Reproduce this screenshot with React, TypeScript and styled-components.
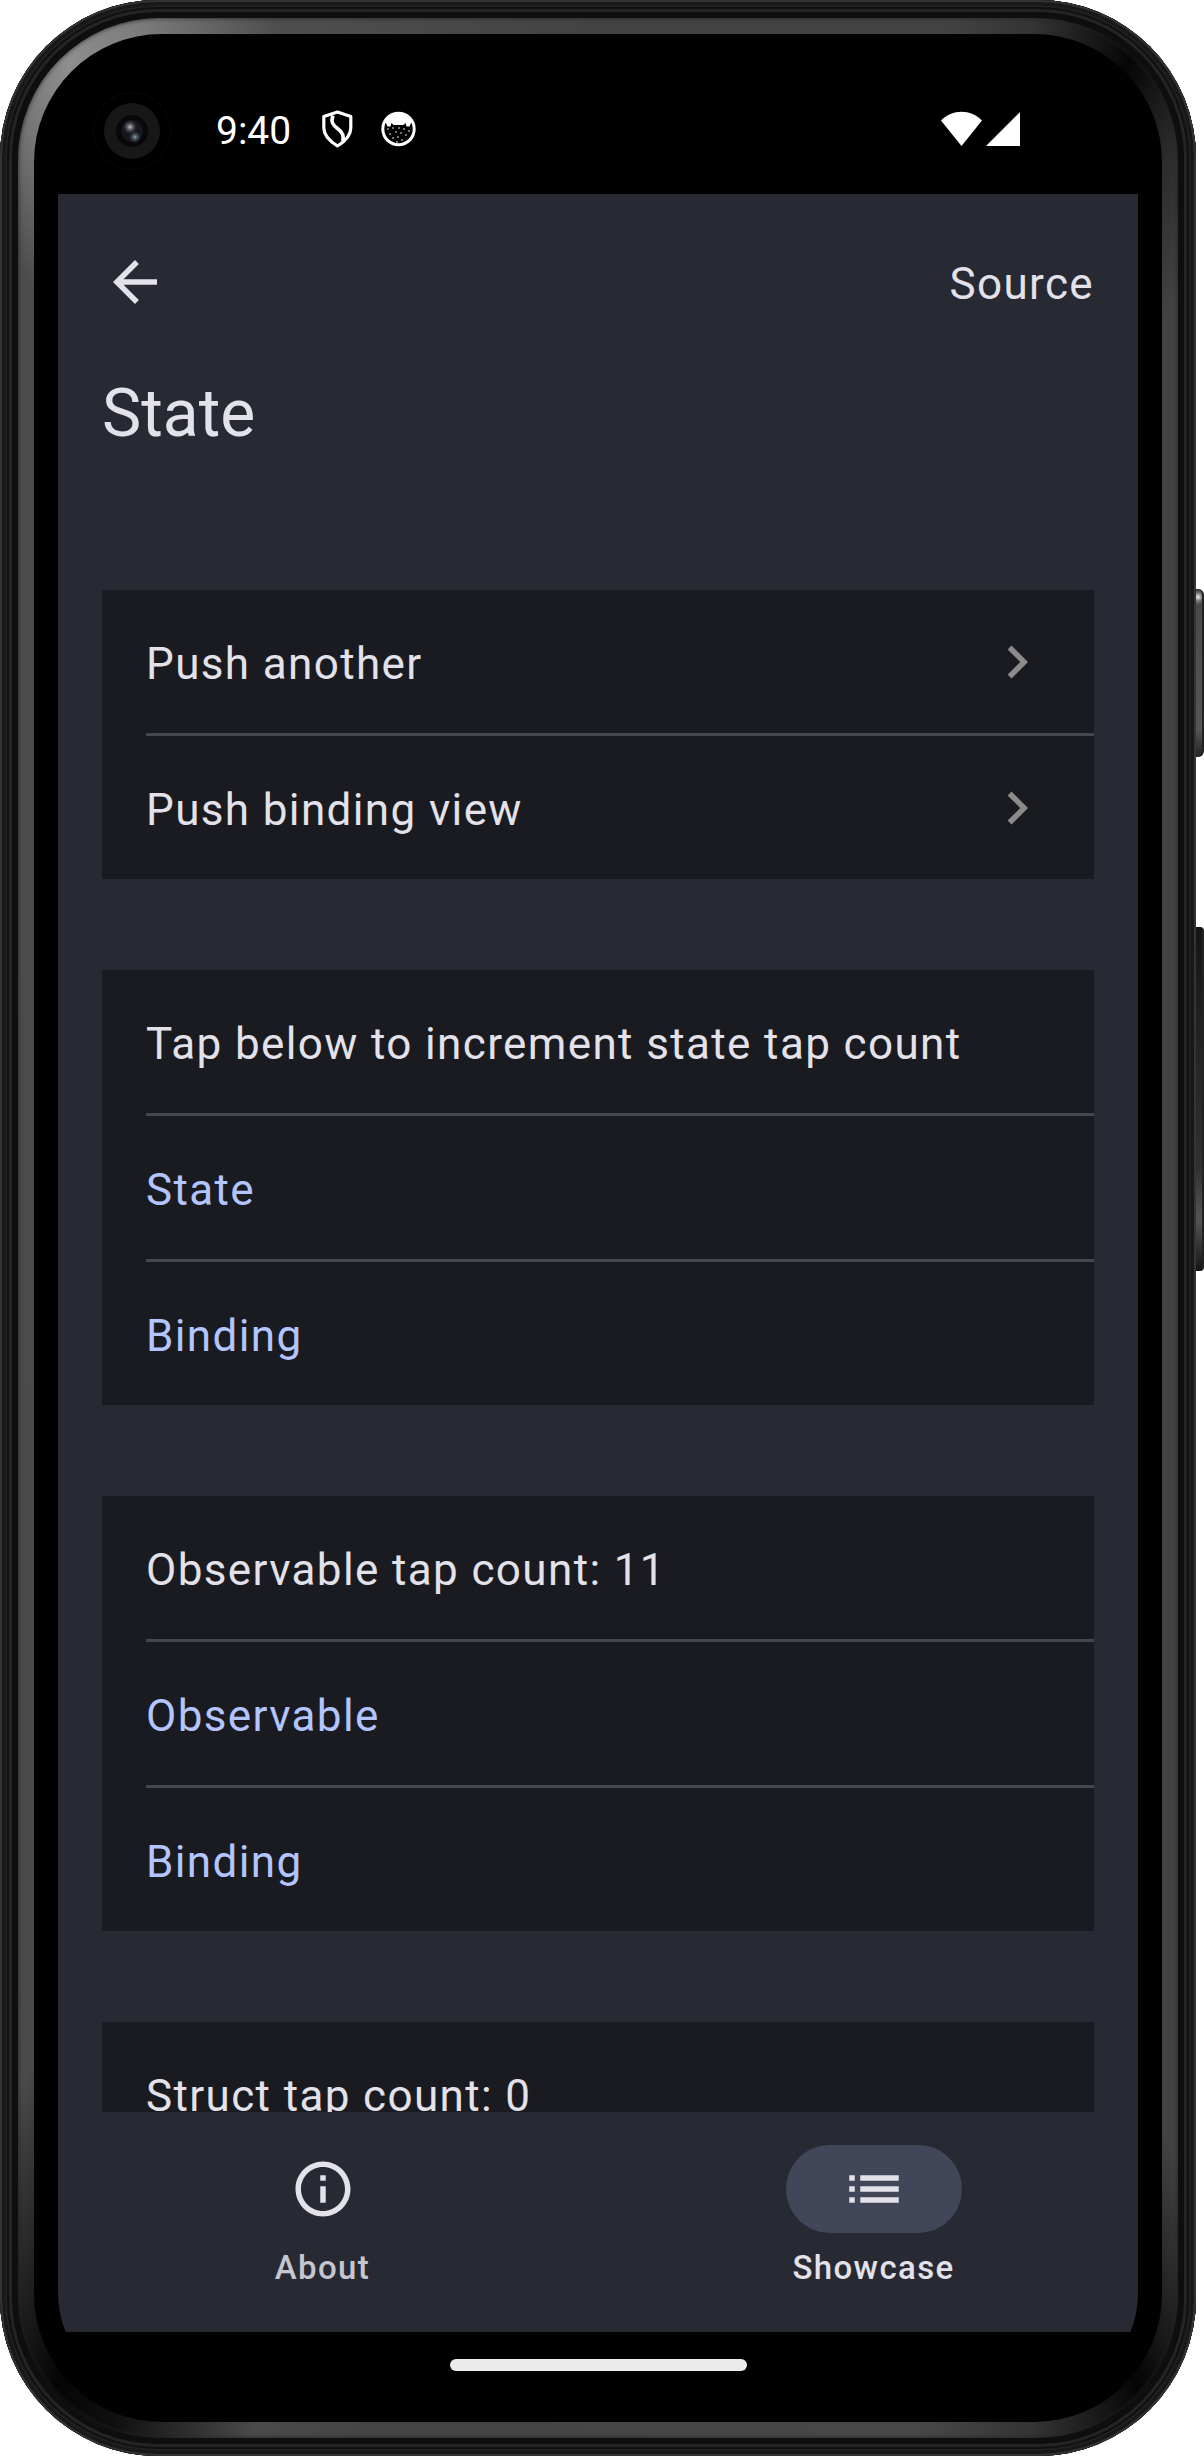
import React from "react";
import styled, { createGlobalStyle } from "styled-components";

const Global = createGlobalStyle`
  * { box-sizing: border-box; }
  html, body { margin: 0; background: #fff; }
  body { font-family: Roboto, "Noto Sans", sans-serif; color: #e3e1e9; }
`;

const Stage = styled.div`
  display: flex;
  width: 1204px;
  height: 2456px;
  overflow: hidden;
`;

const Body = styled.div`
  width: 1196px;
  height: 2456px;
  padding: 18px;
  border-radius: 158px;
  background: #101010;
  box-shadow: inset 0 0 0 2px #343434, inset 0 0 0 5px #181818, inset 0 0 0 7px #202020,
    inset 0 0 0 9px #101010, inset 0 0 0 12px #242424, inset 0 0 4px 15px #0e0e0e;
`;

const Rim = styled.div`
  height: 100%;
  padding: 16px;
  border-radius: 142px;
  background: conic-gradient(
    from 0deg,
    #434343 0deg, #434343 16deg, #333 20deg, #060606 24.5deg, #2c2c2c 28deg, #434343 32deg,
    #434343 148deg, #2c2c2c 151deg, #050505 155deg, #333 160deg, #484848 165deg,
    #444 190deg, #4a4a4a 196deg, #101010 202deg, #050505 205deg, #262626 209deg, #4a4a4a 214deg,
    #4c4c4c 329deg, #747474 332.5deg, #8e8e8e 335.5deg, #7c7c7c 339deg, #4e4e4e 345deg, #434343 360deg
  );
  box-shadow: inset 0 0 4px #222;
`;

const Glass = styled.div`
  height: 100%;
  padding: 25px 24px;
  border-radius: 128px;
  background: #010101;
`;

const Screen = styled.div`
  display: flex;
  flex-direction: column;
  height: 2338px;
  border-radius: 104px;
  overflow: hidden;
  background: #000;
`;

const Keys = styled.div`
  width: 8px;
  padding-top: 589px;
  display: flex;
  flex-direction: column;
  gap: 170px;
`;

const PowerKey = styled.div`
  height: 168px;
  border-radius: 0 6px 6px 0;
  border-right: 2px solid #222;
  background: radial-gradient(circle at 2px 8px, #eee 0, #777 4px, transparent 8px),
    linear-gradient(#222 0, #484a49 16px, #555756 140px, #222 100%);
`;

const VolumeKey = styled.div`
  height: 344px;
  border-radius: 0 4px 4px 0;
  border-right: 2px solid #222;
  background: linear-gradient(#151515, #262626 40%, #303030 70%, #555 85%, #151515);
`;

const StatusBar = styled.div`
  height: 135px;
  flex: none;
  display: flex;
  align-items: center;
  padding: 5px 117px 0 35px;
`;

const Camera = styled.div`
  width: 78px;
  height: 78px;
  margin-top: 4px;
  border: 1px solid #0b0b0b;
  border-radius: 50%;
  display: flex;
  align-items: center;
  justify-content: center;
`;

const Clock = styled.time`
  margin: 3px 26px 0 45px;
  width: 80px;
  font-size: 39px;
  line-height: 46px;
  white-space: nowrap;
  color: #fff;
`;

const StatusIcons = styled.div`
  display: flex;
  align-items: center;
  gap: 26px;
  flex: 1;
`;

const Page = styled.main`
  height: 1918px;
  flex: none;
  overflow: hidden;
  background: #272a33;
  padding: 0 44px;
`;

const AppBar = styled.header`
  height: 176px;
  display: flex;
  align-items: center;
  justify-content: space-between;
`;

const BackButton = styled.button`
  border: 0;
  padding: 0;
  background: none;
  display: flex;
`;

const SourceLink = styled.span`
  font-size: 44px;
  line-height: 66px;
  letter-spacing: 1.375px;
  padding-top: 4px;
`;

const Title = styled.h1`
  margin: 0;
  height: 220px;
  font-size: 66px;
  line-height: 88px;
  font-weight: 400;
`;

const Sections = styled.div`
  display: flex;
  flex-direction: column;
  gap: 91px;
`;

const Card = styled.section`
  background: #1a1b20;
  padding-left: 44px;
`;

const Row = styled.div<{ $action?: boolean }>`
  height: 143px;
  display: flex;
  align-items: center;
  justify-content: space-between;
  padding: 1px 44px 0 0;
  font-size: 44px;
  line-height: 66px;
  letter-spacing: 1.375px;
  white-space: nowrap;
  color: ${(p) => (p.$action ? "#b3c5ff" : "#e3e1e9")};

  & + & {
    height: 146px;
    border-top: 3px solid #45464f;
  }
`;

const Label = styled.span`
  padding-top: 4px;
`;

const NavBar = styled.nav`
  height: 220px;
  flex: none;
  display: grid;
  grid-template-columns: 529px 529px;
  column-gap: 22px;
  background: #272a33;
`;

const NavItem = styled.div<{ $active?: boolean }>`
  display: flex;
  flex-direction: column;
  align-items: center;
  padding-top: 33px;
  gap: 13px;
  font-size: 33px;
  line-height: 44px;
  font-weight: 500;
  letter-spacing: 1.375px;
  color: ${(p) => (p.$active ? "#e3e1e9" : "#c6c6d0")};
`;

const Indicator = styled.div<{ $active?: boolean }>`
  width: 176px;
  height: 88px;
  border-radius: 44px;
  display: flex;
  align-items: center;
  justify-content: center;
  background: ${(p) => (p.$active ? "#424659" : "transparent")};
`;

const Gesture = styled.div`
  flex: 1;
  display: flex;
  justify-content: center;
  padding-top: 27px;
`;

const Handle = styled.div`
  width: 297px;
  height: 12px;
  border-radius: 6px;
  background: #ebebeb;
`;

const Glyph = ({ d, size = 66, color = "#e3e1e9" }: { d: string; size?: number; color?: string }) => (
  <svg width={size} height={size} viewBox="0 0 24 24" fill={color}>
    <path d={d} />
  </svg>
);

const BACK = "M20 11H7.83l5.59-5.59L12 4l-8 8 8 8 1.41-1.41L7.83 13H20v-2z";
const CHEVRON = "M10 6L8.59 7.41 13.17 12l-4.58 4.59L10 18l6-6z";
const INFO =
  "M11 7h2v2h-2zm0 4h2v6h-2zm1-9C6.48 2 2 6.48 2 12s4.48 10 10 10 10-4.48 10-10S17.52 2 12 2zm0 18c-4.41 0-8-3.59-8-8s3.59-8 8-8 8 3.59 8 8-3.59 8-8 8z";
const LIST = "M3 13h2v-2H3v2zm0 4h2v-2H3v2zm0-8h2V7H3v2zm4 4h14v-2H7v2zm0 4h14v-2H7v2zM7 7v2h14V7H7z";

const Lens = () => (
  <svg width="56" height="56" viewBox="0 0 56 56">
    <defs>
      <radialGradient id="glintA"><stop offset="0" stopColor="#c4c4ca" /><stop offset="1" stopColor="#4a4a50" stopOpacity="0" /></radialGradient>
      <radialGradient id="glintB"><stop offset="0" stopColor="#8ba0ab" /><stop offset="1" stopColor="#28323c" stopOpacity="0" /></radialGradient>
    </defs>
    <circle cx="28" cy="28" r="28" fill="#171718" />
    <circle cx="28" cy="28" r="16" fill="#08080a" />
    <circle cx="28" cy="28" r="11" fill="#15171c" />
    <circle cx="26" cy="24" r="7" fill="url(#glintA)" />
    <circle cx="31" cy="34" r="6.5" fill="url(#glintB)" />
  </svg>
);

const Shield = () => (
  <svg width="32" height="38" viewBox="0 0 32 38" fill="none" stroke="#fff" strokeWidth="3.2" strokeLinejoin="round">
    <path d="M15.500 2L28.800 6.500V18c0 8-6 13.500-13.300 18C8.200 31.500 1.800 26 1.800 18V6.500z" />
    <path d="M11 5.500C8.500 12 11 15 15.500 18.500 20.500 22 22.500 25.500 20.500 31" strokeWidth="3.600" />
  </svg>
);

const Face = () => (
  <svg width="36" height="36" viewBox="0 0 36 36">
    <circle cx="18.500" cy="18" r="15.700" fill="#000" stroke="#fff" strokeWidth="3" />
    <path d="M5 10C10-1 27-1 32 10L29.500 15.500H26.500L25.500 12 23.500 14H13.500L11.500 12 10.500 15.500H7.500z" fill="#fff" />
    <g fill="#fff">
      {[[8, 18], [13, 17], [19, 17], [24, 18], [29, 20], [10, 23], [16, 21], [21, 22], [26, 24], [13, 27], [18, 26], [22, 29], [17, 31]].map(([x, y]) => (
        <circle key={`${x}-${y}`} cx={x} cy={y} r=".8" />
      ))}
    </g>
  </svg>
);

const Signal = () => (
  <svg width="80" height="36" viewBox="0 0 80 36" fill="#fff">
    <path d="M0 9.500C11-2.200 30-2.200 41 9.500L20.500 35z" />
    <path d="M45 35L79 1V35z" />
  </svg>
);

type Item = { text: string; action?: boolean; push?: boolean };

const groups: Item[][] = [
  [{ text: "Push another", push: true }, { text: "Push binding view", push: true }],
  [{ text: "Tap below to increment state tap count" }, { text: "State", action: true }, { text: "Binding", action: true }],
  [{ text: "Observable tap count: 11" }, { text: "Observable", action: true }, { text: "Binding", action: true }],
  [{ text: "Struct tap count: 0" }],
];

export default function App() {
  return (
    <>
      <Global />
      <Stage>
        <Body>
          <Rim>
            <Glass>
              <Screen>
                <StatusBar>
                  <Camera><Lens /></Camera>
                  <Clock>9:40</Clock>
                  <StatusIcons><Shield /><Face /></StatusIcons>
                  <Signal />
                </StatusBar>
                <Page>
                  <AppBar>
                    <BackButton aria-label="Back"><Glyph d={BACK} /></BackButton>
                    <SourceLink>Source</SourceLink>
                  </AppBar>
                  <Title>State</Title>
                  <Sections>
                    {groups.map((items, i) => (
                      <Card key={i}>
                        {items.map((item) => (
                          <Row key={item.text} $action={item.action}>
                            <Label>{item.text}</Label>
                            {item.push && <Glyph d={CHEVRON} color="#8b8b8a" />}
                          </Row>
                        ))}
                      </Card>
                    ))}
                  </Sections>
                </Page>
                <NavBar>
                  <NavItem>
                    <Indicator><Glyph d={INFO} /></Indicator>
                    About
                  </NavItem>
                  <NavItem $active>
                    <Indicator $active><Glyph d={LIST} /></Indicator>
                    Showcase
                  </NavItem>
                </NavBar>
                <Gesture><Handle /></Gesture>
              </Screen>
            </Glass>
          </Rim>
        </Body>
        <Keys><PowerKey /><VolumeKey /></Keys>
      </Stage>
    </>
  );
}
